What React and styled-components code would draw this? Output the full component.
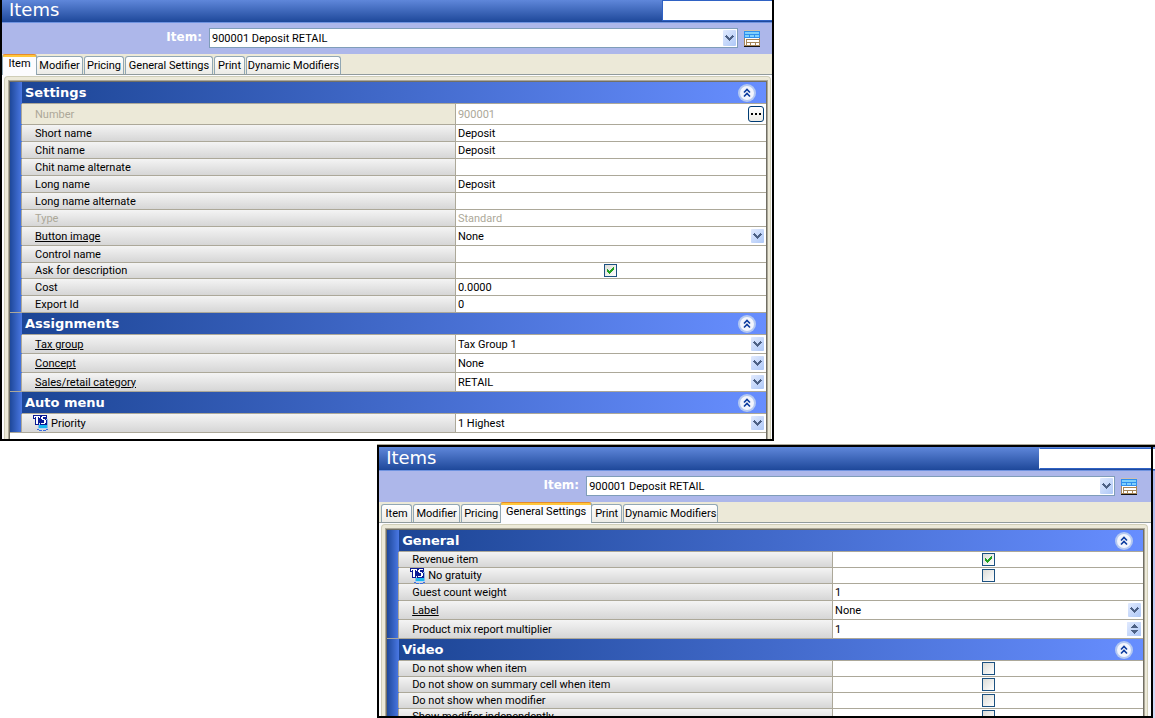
import React, { useId } from 'react';
import styled, { createGlobalStyle, css } from 'styled-components';

const COLORS = {
  line: '#aca899',
  face: '#ece9d8',
  bar: '#adb7ea',
  combo: '#7f9db9',
  disabled: '#aca899',
  glyph: '#4d6185',
};

const FONTS = {
  ui: "Roboto, 'Liberation Sans', sans-serif",
  title: "'DejaVu Sans', sans-serif",
};

const TABS = [
  { name: 'Item', width: 31 },
  { name: 'Modifier', width: 47 },
  { name: 'Pricing', width: 40 },
  { name: 'General Settings', width: 88 },
  { name: 'Print', width: 31 },
  { name: 'Dynamic Modifiers', width: 95 },
];

const ITEM_GROUPS = [
  {
    title: 'Settings',
    rows: [
      { label: 'Number', value: '900001', type: 'lookup', height: 21, disabled: true },
      { label: 'Short name', value: 'Deposit', height: 17 },
      { label: 'Chit name', value: 'Deposit', height: 17 },
      { label: 'Chit name alternate', value: '', height: 17 },
      { label: 'Long name', value: 'Deposit', height: 17 },
      { label: 'Long name alternate', value: '', height: 17 },
      { label: 'Type', value: 'Standard', height: 17, disabled: true },
      { label: 'Button image', value: 'None', type: 'select', height: 19, link: true },
      { label: 'Control name', value: '', height: 17 },
      { label: 'Ask for description', value: true, type: 'check', height: 16 },
      { label: 'Cost', value: '0.0000', height: 17 },
      { label: 'Export Id', value: '0', height: 17 },
    ],
  },
  {
    title: 'Assignments',
    rows: [
      { label: 'Tax group', value: 'Tax Group 1', type: 'select', height: 19, link: true },
      { label: 'Concept', value: 'None', type: 'select', height: 19, link: true },
      { label: 'Sales/retail category', value: 'RETAIL', type: 'select', height: 19, link: true },
    ],
  },
  {
    title: 'Auto menu',
    rows: [
      { label: 'Priority', value: '1 Highest', type: 'select', height: 19, badge: true },
    ],
  },
];

const GENERAL_GROUPS = [
  {
    title: 'General',
    rows: [
      { label: 'Revenue item', value: true, type: 'check', height: 16 },
      { label: 'No gratuity', value: false, type: 'check', height: 16, badge: true },
      { label: 'Guest count weight', value: '1', height: 17 },
      { label: 'Label', value: 'None', type: 'select', height: 19, link: true },
      { label: 'Product mix report multiplier', value: '1', type: 'spin', height: 19 },
    ],
  },
  {
    title: 'Video',
    rows: [
      { label: 'Do not show when item', value: false, type: 'check', height: 16 },
      { label: 'Do not show on summary cell when item', value: false, type: 'check', height: 16 },
      { label: 'Do not show when modifier', value: false, type: 'check', height: 16 },
      { label: 'Show modifier independently', value: false, type: 'check', height: 16 },
    ],
  },
];

const ChevronDown = () => (
  <svg width="9" height="6" viewBox="0 0 9 6" shapeRendering="crispEdges" aria-hidden="true">
    <path
      fill={COLORS.glyph}
      d="M1 0h1v1h1v1h1v1h1v-1h1v-1h1v-1h1v1h1v1h-1v1h-1v1h-1v1h-1v1h-1v-1h-1v-1h-1v-1h-1v-1h-1v-1h1z"
    />
  </svg>
);

const CollapseIcon = () => (
  <svg width="18" height="18" viewBox="0 0 18 18" aria-hidden="true">
    <circle cx="9" cy="9" r="9" fill="#b3c8f2" />
    <circle cx="9" cy="9" r="7" fill="#f2f5fd" />
    <path
      d="M6 8.5 9 5.5l3 3M6 12.5l3-3 3 3"
      fill="none"
      stroke="#0a3a9e"
      strokeWidth="1.6"
    />
  </svg>
);

const CheckMark = () => (
  <svg width="13" height="13" viewBox="0 0 13 13" shapeRendering="crispEdges" aria-hidden="true">
    <path
      fill="#21a121"
      d="M3 5h1v1h1v1h1v-1h1v-1h1v-1h1v-1h1v3h-1v1h-1v1h-1v1h-1v1h-1v-1h-1v-1h-1z"
    />
  </svg>
);

const LayoutIcon = () => (
  <svg width="16" height="17" viewBox="0 0 16 17" shapeRendering="crispEdges" aria-hidden="true">
    <path fill="#cdbfae" d="M0 0h16v1H0z" />
    <path fill="#2f8fee" d="M0 1h16v7H0z" />
    <path fill="#7fd0fb" d="M1 2h14v2H1zM1 5h4v2H1zM6 5h4v2H6zM11 5h4v2h-4z" />
    <path fill="#a68558" d="M0 8h16v8H0z" />
    <path fill="#fff" d="M1 8h14v1H1zM1 9h1v6H1zM3 10h12v2H3zM3 13h3v2H3zM7 13h4v2H7zM12 13h3v2h-3z" />
    <path fill="#111" d="M0 16h16v1H0z" />
  </svg>
);

const BadgeIcon = () => (
  <svg width="16" height="16" viewBox="0 0 16 16" shapeRendering="crispEdges" aria-hidden="true">
    <path fill="#8fb8e8" d="M13 4h2v9h-2zM5 9h2v4H5z" />
    <path fill="#19b8f0" d="M6 10h8v3H6z" />
    <path fill="#b8d4f4" d="M5 13h10v1H5z" />
    <path fill="#3c6ee0" d="M4 14h2v1H4zM6 15h3v1H6zM10 15h3v1h-3zM13 14h2v1h-2z" />
    <path fill="#0a1a94" d="M0 0h14v4h-1v1h1v5H7V8H6v2H2V4H0z" />
    <path fill="#fff" d="M1 1h6v2H6V2H5v7H3V2H2v1H1zM9 1h4v1H9zM8 2h2v2H8zM9 4h3v1H9zM11 5h2v3h-2zM8 8h4v1H8z" />
  </svg>
);

const Field = ({ id, row }) => {
  if (row.type === 'check') {
    return (
      <CheckWrap>
        <CheckInput id={id} type="checkbox" defaultChecked={row.value} />
        <CheckMark />
      </CheckWrap>
    );
  }

  if (row.type === 'select') {
    return (
      <SelectWrap>
        <Select id={id} defaultValue={row.value}>
          <option>{row.value}</option>
        </Select>
        <Arrow>
          <ChevronDown />
        </Arrow>
      </SelectWrap>
    );
  }

  return (
    <>
      <TextInput id={id} type="text" defaultValue={row.value} disabled={row.disabled} />
      {row.type === 'lookup' && (
        <LookupButton type="button" aria-label="Browse">
          <svg width="10" height="2" shapeRendering="crispEdges" aria-hidden="true">
            <path d="M0 0h2v2H0zM4 0h2v2H4zM8 0h2v2H8z" />
          </svg>
        </LookupButton>
      )}
      {row.type === 'spin' && (
        <SpinButton type="button" aria-label="Change value">
          <svg width="7" height="10" viewBox="0 0 7 10" shapeRendering="crispEdges" aria-hidden="true">
            <path
              fill={COLORS.glyph}
              d="M3 0h1v1h1v1h1v1h1v1H0V3h1V2h1V1h1zM0 6h7v1H6v1H5v1H4v1H3V9H2V8H1V7H0z"
            />
          </svg>
        </SpinButton>
      )}
    </>
  );
};

const PropertyRow = ({ row }) => {
  const id = useId();

  return (
    <Row $height={row.height}>
      <LabelCell $disabled={row.disabled} $flat={row.type === 'lookup'} $badge={row.badge}>
        {row.badge && <BadgeIcon />}
        <RowLabel htmlFor={id} $link={row.link}>{row.label}</RowLabel>
      </LabelCell>
      <ValueCell>
        <Field id={id} row={row} />
      </ValueCell>
    </Row>
  );
};

const ItemsWindow = ({ active, groups, className, gutter }) => {
  const id = useId();

  return (
    <Frame className={className}>
      <TitleBar>
        <Title>Items</Title>
        <BlankBox />
      </TitleBar>
      <ItemBar $gutter={gutter}>
        <ItemLabel htmlFor={id}>Item:</ItemLabel>
        <Combo>
          <Select id={id} defaultValue="item">
            <option value="item">900001 Deposit RETAIL</option>
          </Select>
          <Arrow $tall>
            <ChevronDown />
          </Arrow>
        </Combo>
        <IconButton type="button" aria-label="Layout">
          <LayoutIcon />
        </IconButton>
      </ItemBar>
      <TabStrip role="tablist">
        {TABS.map(({ name, width }) => (
          <Tab
            key={name}
            type="button"
            role="tab"
            aria-selected={name === active}
            $active={name === active}
            $width={width}
          >
            {name}
          </Tab>
        ))}
      </TabStrip>
      <Panel $gutter={gutter}>
        <PanelBody>
          <PropertyGrid>
            {groups.map(group => (
              <Group key={group.title}>
                <Side />
                <div>
                  <GroupHeader>
                    <GroupTitle>{group.title}</GroupTitle>
                    <IconButton type="button" aria-label={`Collapse ${group.title}`}>
                      <CollapseIcon />
                    </IconButton>
                  </GroupHeader>
                  {group.rows.map(row => (
                    <PropertyRow key={row.label} row={row} />
                  ))}
                </div>
              </Group>
            ))}
          </PropertyGrid>
        </PanelBody>
      </Panel>
    </Frame>
  );
};

const App = () => (
  <Page>
    <GlobalStyle />
    <FirstWindow active="Item" groups={ITEM_GROUPS} gutter={1} />
    <SecondRow>
      <SecondWindow active="General Settings" groups={GENERAL_GROUPS} gutter={3} />
      <Edge />
    </SecondRow>
  </Page>
);

const GlobalStyle = createGlobalStyle`
  *, *::before, *::after {
    box-sizing: border-box;
  }

  body {
    margin: 0;
    background: #fff;
    color: #000;
    font: 11px/13px ${FONTS.ui};
  }

  button, input, select {
    margin: 0;
    padding: 0;
    border: 0;
    border-radius: 0;
    background: none;
    color: inherit;
    font: inherit;
  }

  svg {
    display: block;
    flex: none;
  }
`;

const Page = styled.main`
  display: flex;
  flex-direction: column;
  gap: 3px;
  height: 100vh;
  overflow: hidden;
`;

const Frame = styled.section`
  display: flex;
  flex-direction: column;
  border: 2px solid #000;
  background: #fff;
  overflow: hidden;
`;

const FirstWindow = styled(ItemsWindow)`
  flex: none;
  width: 67%;
  border-top: 0;
`;

const SecondRow = styled.div`
  flex: 1;
  display: flex;
  min-height: 0;
  margin-left: calc(33% - 4px);
  border-top: 1px solid ${COLORS.line};
`;

const SecondWindow = styled(ItemsWindow)`
  flex: 1;
`;

const Edge = styled.div`
  width: 2px;
  border-top: 2px solid #000;
  background: linear-gradient(#5f87da 2px, #fff 2px, #fff 22px, #1e489a 22px, #6f93e0 24px, ${COLORS.bar} 24px, #d6dbf6);
`;

const TitleBar = styled.header`
  flex: none;
  display: flex;
  justify-content: space-between;
  height: 23px;
  border-bottom: 1px solid #6f93e0;
  background: linear-gradient(#5f87da, #1e489a);

  ${SecondWindow} & {
    height: 24px;
    padding-top: 1px;
  }
`;

const Title = styled.h1`
  margin: 0;
  padding-left: 7px;
  color: #fff;
  font: 18px/20px ${FONTS.title};
`;

const BlankBox = styled.div`
  width: 110px;
  height: 21px;
  border: solid #2f62c4;
  border-width: 1px 0 1px 1px;
  background: #fff;

  ${SecondWindow} & {
    width: 112px;
    border-left-color: #fff;
  }
`;

const ItemBar = styled.div`
  flex: none;
  display: flex;
  align-items: center;
  height: 31px;
  padding: 5px ${props => props.$gutter + 11}px 6px 0;
  background: ${COLORS.bar};
`;

const ItemLabel = styled.label`
  width: 207px;
  padding: 0 7px 1px 0;
  color: #fff;
  font: bold 12px/15px ${FONTS.title};
  text-align: right;
`;

const SelectWrap = styled.div`
  flex: 1;
  display: flex;
  align-items: center;
  height: 100%;
  padding-right: 2px;
`;

const Combo = styled(SelectWrap)`
  height: 20px;
  margin-right: 6px;
  padding-right: 1px;
  border: 1px solid ${COLORS.combo};
  background: #fff;
`;

const Select = styled.select`
  flex: 1;
  min-width: 0;
  height: 100%;
  padding-left: 2px;
  appearance: none;
`;

const Arrow = styled.span`
  flex: none;
  display: grid;
  place-items: center;
  width: 13px;
  height: ${props => (props.$tall ? 16 : 14)}px;
  border-radius: 1px;
  background: linear-gradient(135deg, #e1eafe, #aec8f7);
  pointer-events: none;
`;

const IconButton = styled.button`
  flex: none;
`;

const TabStrip = styled.div`
  flex: none;
  display: flex;
  align-items: flex-end;
  gap: 1px;
  height: 21px;
  padding-left: 2px;
  border-bottom: 1px solid #919b9c;
  background: ${COLORS.face};
`;

const Tab = styled.button`
  flex: none;
  width: ${props => props.$width}px;
  height: 18px;
  border: 1px solid #91a7b4;
  border-bottom: 0;
  border-radius: 3px 3px 0 0;
  background: linear-gradient(#fff, #ecebe6);
  white-space: nowrap;

  ${props => props.$active && css`
    z-index: 1;
    width: ${props.$width + 4}px;
    height: 21px;
    margin: 0 -2px -1px;
    padding-bottom: 3px;
    border-top-color: #e68b2c;
    background: linear-gradient(#ffc73c 2px, #fcfcfe 2px);
  `}
`;

const Panel = styled.div`
  padding: 1px ${props => props.$gutter}px 0 2px;
  background: #fcfcfe;
`;

const PanelBody = styled.div`
  padding: 4px 3px 0 4px;
  border: 1px solid #d0ceb8;
  border-bottom: 0;
  border-radius: 4px 4px 0 0;
  background: ${COLORS.face};
`;

const PropertyGrid = styled.form`
  padding-bottom: 6px;
  border: 1px solid #716f64;
  border-bottom: 0;
  background: #fff;
  box-shadow: 0 0 0 1px ${COLORS.line};
`;

const Group = styled.section`
  display: grid;
  grid-template-columns: 12px 1fr;
`;

const Side = styled.div`
  border-bottom: 1px solid ${COLORS.line};
  background: linear-gradient(90deg, #1e489a, #4a78e4);
`;

const GroupHeader = styled.header`
  display: flex;
  align-items: center;
  justify-content: space-between;
  height: 22px;
  padding: 0 10px 0 3px;
  border-bottom: 1px solid ${COLORS.line};
  background: linear-gradient(90deg, #1c4595, #678eff);
`;

const GroupTitle = styled.h2`
  margin: 0;
  color: #fff;
  font: bold 13px/16px ${FONTS.title};
`;

const Row = styled.div`
  display: grid;
  grid-template-columns: 7fr 5fr;
  height: ${props => props.$height}px;
  border-bottom: 1px solid ${COLORS.line};
`;

const LabelCell = styled.div`
  display: flex;
  align-items: center;
  gap: 2px;
  min-height: 0;
  margin-left: -1px;
  padding-left: ${props => (props.$badge ? 11 : 13)}px;
  border-right: 1px solid ${COLORS.line};
  border-left: 1px solid ${COLORS.line};
  background: ${props => (props.$flat ? COLORS.face : 'linear-gradient(#f4f4f4, #d6d6d6)')};
  color: ${props => (props.$disabled ? COLORS.disabled : 'inherit')};
`;

const RowLabel = styled.label`
  text-decoration: ${props => (props.$link ? 'underline' : 'none')};
`;

const ValueCell = styled.div`
  display: flex;
  align-items: center;
  min-width: 0;
  min-height: 0;
`;

const TextInput = styled.input`
  flex: 1;
  min-width: 0;
  height: 100%;
  padding-left: 2px;

  &:disabled {
    color: ${COLORS.disabled};
  }
`;

const CheckWrap = styled.span`
  flex: 1;
  display: grid;
  place-items: center;

  & > * {
    grid-area: 1 / 1;
  }

  & > svg {
    pointer-events: none;
  }

  & > input:not(:checked) + svg {
    visibility: hidden;
  }
`;

const CheckInput = styled.input`
  width: 13px;
  height: 13px;
  border: 1px solid #1c5180;
  background: linear-gradient(135deg, #dcdcd7, #fff);
  appearance: none;
`;

const LookupButton = styled.button`
  display: grid;
  place-items: center;
  width: 16px;
  height: 16px;
  margin-right: 2px;
  border: 1px solid #003c74;
  border-radius: 3px;
  background: linear-gradient(#fff, #ecebe6);
`;

const SpinButton = styled.button`
  display: grid;
  place-items: center;
  width: 14px;
  height: 14px;
  margin-right: 2px;
  background: linear-gradient(135deg, #e1eafe, #aec8f7);
`;

export default App;
